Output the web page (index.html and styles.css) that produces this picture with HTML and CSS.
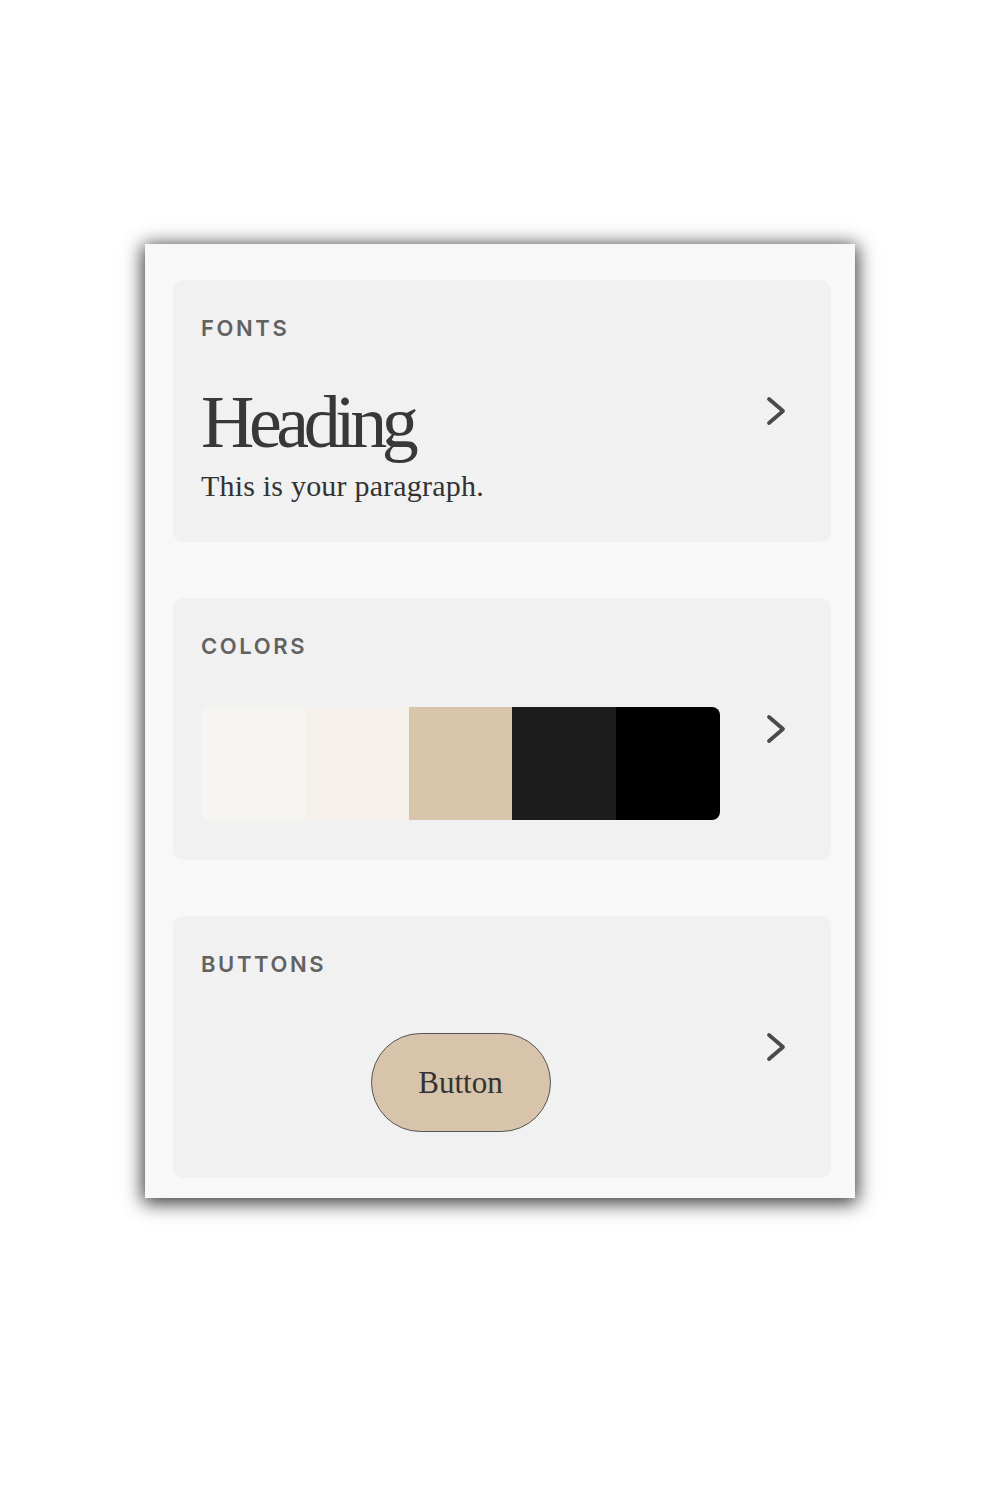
FILE: index.html
```html
<!DOCTYPE html>
<html>
<head>
<meta charset="utf-8">
<link rel="stylesheet" href="styles.css">
</head>
<body>
<div class="panel">
  <section class="card">
    <div class="card-body">
      <div class="label">FONTS</div>
      <div class="heading">Heading</div>
      <div class="para">This is your paragraph.</div>
    </div>
    <svg class="chev" width="24" height="30" viewBox="0 0 24 30"><polyline points="4,3 18,15 4,27" fill="none" stroke="#4a4a4a" stroke-width="3.8" stroke-linecap="round" stroke-linejoin="round"/></svg>
  </section>
  <section class="card">
    <div class="card-body">
      <div class="label">COLORS</div>
      <div class="swatches">
        <div class="sw sw1"></div>
        <div class="sw sw2"></div>
        <div class="sw sw3"></div>
        <div class="sw sw4"></div>
        <div class="sw sw5"></div>
      </div>
    </div>
    <svg class="chev" width="24" height="30" viewBox="0 0 24 30"><polyline points="4,3 18,15 4,27" fill="none" stroke="#4a4a4a" stroke-width="3.8" stroke-linecap="round" stroke-linejoin="round"/></svg>
  </section>
  <section class="card">
    <div class="card-body">
      <div class="label">BUTTONS</div>
      <div class="btn-row"><div class="btn">Button</div></div>
    </div>
    <svg class="chev" width="24" height="30" viewBox="0 0 24 30"><polyline points="4,3 18,15 4,27" fill="none" stroke="#4a4a4a" stroke-width="3.8" stroke-linecap="round" stroke-linejoin="round"/></svg>
  </section>
</div>
</body>
</html>
```
FILE: styles.css
```css
html, body {
  margin: 0;
  padding: 0;
  background: #ffffff;
}
body {
  min-height: 1500px;
  padding-top: 244px;
  box-sizing: border-box;
}
.panel {
  width: 710px;
  height: 954px;
  box-sizing: border-box;
  margin: 0 auto;
  padding: 36px 24px 20px 28px;
  background: #f8f8f8;
  box-shadow: 0 3px 18px 2px rgba(0, 0, 0, 0.8);
  display: flex;
  flex-direction: column;
  gap: 56px;
}
.card {
  height: 262px;
  box-sizing: border-box;
  background: #f1f1f1;
  border-radius: 10px;
  display: flex;
  align-items: center;
  padding: 0 0 0 28px;
}
.card-body {
  width: 519px;
  align-self: stretch;
  padding-top: 37px;
  box-sizing: border-box;
}
.chev {
  margin-left: 45px;
  display: block;
}
.label {
  font-family: Inter, "Liberation Sans", sans-serif;
  font-size: 22px;
  line-height: 22px;
  font-weight: 600;
  letter-spacing: 2.6px;
  color: #626262;
}
.heading {
  margin-top: 46px;
  font-family: "Liberation Serif", serif;
  font-size: 74px;
  line-height: 74px;
  letter-spacing: -5.5px;
  color: #383838;
}
.para {
  margin-top: 12px;
  font-family: "Liberation Serif", serif;
  font-size: 30px;
  line-height: 29px;
  letter-spacing: 0.2px;
  color: #333;
}
.swatches {
  margin-top: 50px;
  height: 113px;
  display: flex;
  border-radius: 8px;
  overflow: hidden;
}
.sw {
  flex: 1;
}
.sw1 { background: #f7f5f2; }
.sw2 { background: #f5f0ea; }
.sw3 { background: #d7c4ab; }
.sw4 { background: #1c1c1c; }
.sw5 { background: #000000; }
.btn-row {
  margin-top: 58px;
  display: flex;
  justify-content: center;
}
.btn {
  width: 180px;
  height: 99px;
  box-sizing: border-box;
  border: 1.5px solid #555;
  border-radius: 50px;
  background: #d7c4ab;
  display: flex;
  align-items: center;
  justify-content: center;
  font-family: "Liberation Serif", serif;
  font-size: 31px;
  color: #333;
}
```
